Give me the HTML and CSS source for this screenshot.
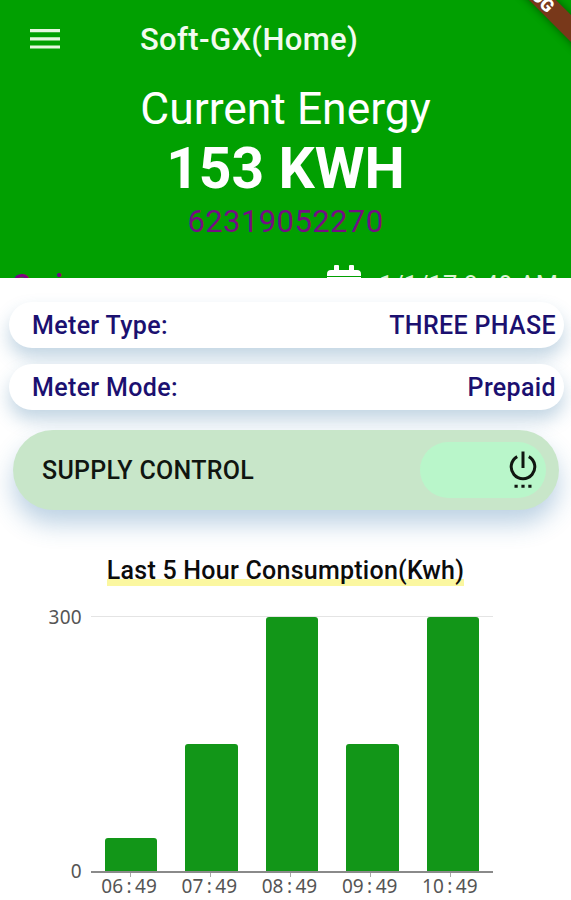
FILE: index.html
```
<!DOCTYPE html>
<html lang="en">
  <head>
    <meta charset="UTF-8" />
    <title>Soft-GX(Home)</title>
    <link rel="stylesheet" href="styles.css">
  </head>
  <body>
    <header>
      <div class="app-bar">
        <svg class="menu-icon" viewBox="0 0 30 20">
          <path d="M0 0h30v3.2H0zM0 8.2h30v3.2H0zM0 16.4h30v3.2H0z" fill="#e6f7df" />
        </svg>
        <h1>Soft-GX(Home)</h1>
      </div>
      <div class="energy">
        <div class="energy-label">Current Energy</div>
        <div class="energy-value">153 KWH</div>
        <div class="meter-number">62319052270</div>
      </div>
      <div class="reading">
        <span class="owner">Seri</span>
        <svg class="calendar-icon" viewBox="0 0 34 36">
          <path d="M4 5h3V1a1 1 0 0 1 1-1h3a1 1 0 0 1 1 1v4h10V1a1 1 0 0 1 1-1h3a1 1 0 0 1 1 1v4h3a4 4 0 0 1 4 4v2H0V9a4 4 0 0 1 4-4zM0 12h34v24H0z" fill="#fff" />
        </svg>
        <span class="date">1/1/17 8:49 AM</span>
      </div>
      <div class="debug-banner">DEBUG</div>
    </header>

    <main>
      <div class="info-row">
        <span>Meter Type:</span>
        <span class="info-value">THREE PHASE</span>
      </div>
      <div class="info-row">
        <span>Meter Mode:</span>
        <span class="info-value">Prepaid</span>
      </div>
      <div class="supply">
        <span class="supply-label">SUPPLY CONTROL</span>
        <div class="switch">
          <svg class="power-icon" viewBox="0 0 28 38">
            <path d="M14 0.5V17" />
            <path d="M8.2 5.6A11.8 11.8 0 1 0 19.8 5.6" />
            <path d="M5.5 35.2h3.2M12.4 35.2h3.2M19.3 35.2h3.2" />
          </svg>
        </div>
      </div>

      <div class="chart-title"><h2>Last 5 Hour Consumption(Kwh)</h2></div>
      <div class="chart">
        <div class="y-axis">
          <span>300</span>
          <span>0</span>
        </div>
        <div class="plot">
          <div class="bars">
            <div class="bar" style="height: 13%"></div>
            <div class="bar" style="height: 50%"></div>
            <div class="bar" style="height: 100%"></div>
            <div class="bar" style="height: 50%"></div>
            <div class="bar" style="height: 100%"></div>
          </div>
          <div class="x-axis">
            <span>06<i>:</i>49</span>
            <span>07<i>:</i>49</span>
            <span>08<i>:</i>49</span>
            <span>09<i>:</i>49</span>
            <span>10<i>:</i>49</span>
          </div>
        </div>
      </div>
    </main>
  </body>
</html>
```
FILE: styles.css
```
body {
  margin: 0;
  height: 900px;
  overflow: hidden;
  background-color: #fff;
  font-family: Roboto, sans-serif;
}
header {
  position: relative;
  height: 278px;
  overflow: hidden;
  background-color: #01a001;
  color: #fff;
}
.app-bar {
  display: flex;
  align-items: center;
  height: 78px;
  padding-left: 30px;
}
.menu-icon {
  width: 30px;
  height: 20px;
}
h1 {
  margin: 0 0 0 80px;
  font-size: 31px;
  font-weight: 500;
  letter-spacing: 0.35px;
  color: #f2fbf0;
}
.energy {
  text-align: center;
}
.energy-label {
  height: 60px;
  line-height: 62px;
  font-size: 44.4px;
}
.energy-value {
  height: 58px;
  line-height: 61px;
  font-size: 57px;
  font-weight: 700;
}
.meter-number {
  height: 50px;
  line-height: 51px;
  font-size: 31px;
  letter-spacing: 0.4px;
  color: #760d83;
}
.reading {
  display: flex;
  align-items: flex-start;
  padding: 19px 13px 0;
}
.owner {
  margin-top: 3px;
  font-size: 28px;
  line-height: 33px;
  font-weight: 700;
  color: #800080;
}
.calendar-icon {
  width: 34px;
  height: 36px;
  margin-left: auto;
}
.date {
  margin: 4px 0 0 18px;
  font-size: 25.5px;
  line-height: 32px;
  color: #d9f3d0;
}
.debug-banner {
  position: absolute;
  top: -8px;
  right: -53px;
  box-sizing: border-box;
  width: 160px;
  height: 19px;
  padding-right: 36px;
  transform: rotate(45deg);
  background-color: #78381a;
  box-shadow: 0 0 8px rgba(0, 0, 0, 0.45);
  font-size: 18px;
  line-height: 19px;
  font-weight: 900;
  text-align: center;
}
main {
  padding-top: 24px;
}
.info-row {
  display: flex;
  align-items: center;
  justify-content: space-between;
  box-sizing: border-box;
  height: 46px;
  margin: 0 7px 16px 9px;
  padding: 0 8px 0 23px;
  border-radius: 23px;
  background-color: #fff;
  box-shadow: 0 10px 18px rgba(35, 105, 155, 0.28);
  font-size: 25px;
  font-weight: 500;
  letter-spacing: 0.35px;
  color: #1b1070;
}
.supply {
  display: flex;
  align-items: center;
  justify-content: space-between;
  box-sizing: border-box;
  height: 80px;
  margin: 20px 12px 0 13px;
  padding: 0 13px 0 29px;
  border-radius: 40px;
  background-color: #c8e6c9;
  box-shadow: 0 14px 24px rgba(35, 105, 165, 0.3);
}
.supply-label {
  font-size: 25px;
  font-weight: 500;
  letter-spacing: 0.3px;
  color: #101510;
}
.switch {
  display: flex;
  align-items: center;
  justify-content: flex-end;
  box-sizing: border-box;
  width: 126px;
  height: 56px;
  padding-right: 9px;
  border-radius: 28px;
  background-color: #b9f6ca;
}
.power-icon {
  width: 28px;
  height: 38px;
  fill: none;
  stroke: #101510;
  stroke-width: 3;
}
.chart-title {
  display: flex;
  justify-content: center;
  margin-top: 46px;
}
h2 {
  margin: 0;
  height: 30px;
  line-height: 30px;
  font-size: 25px;
  font-weight: 500;
  letter-spacing: 0.25px;
  color: #0c0c0c;
  background: linear-gradient(transparent 23px, #fbf7a0 23px);
}
.chart {
  display: flex;
  margin-top: 20px;
  font-family: "Noto Sans", sans-serif;
  font-size: 19px;
  line-height: 22px;
  color: #555;
}
.y-axis {
  display: flex;
  flex-direction: column;
  justify-content: space-between;
  width: 82px;
  height: 276px;
  text-align: right;
  letter-spacing: 0.3px;
}
.plot {
  width: 402px;
  margin: 10px 0 0 9px;
}
.bars {
  display: flex;
  align-items: flex-end;
  gap: 28px;
  height: 254px;
  padding-left: 14px;
  border-top: 1px solid #e4e4e4;
  border-bottom: 2px solid #8a8a8a;
}
.bar {
  width: 52.4px;
  border-radius: 3px 3px 0 0;
  background-color: #129618;
}
.x-axis {
  display: flex;
  margin-left: -2px;
}
.x-axis span {
  width: 80.2px;
  text-align: center;
}
/* tick under each bar */
.x-axis span::before {
  content: "";
  display: block;
  width: 1px;
  height: 4px;
  margin: 0 auto -2px;
  border-left: 2px solid transparent;
  background-color: #aaa;
  background-clip: padding-box;
}
.x-axis i {
  display: inline-block;
  width: 12px;
  font-style: normal;
}
```
